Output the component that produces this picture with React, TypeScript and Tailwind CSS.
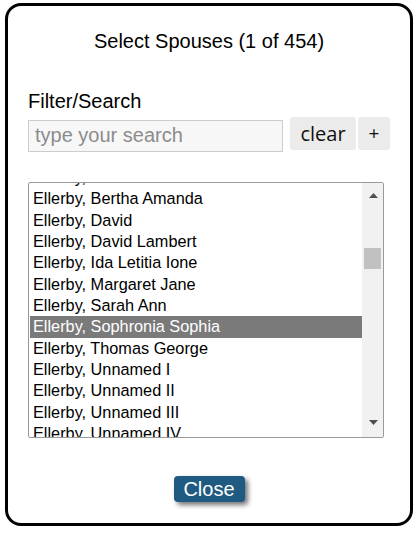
import React from "react";

const names = [
  "Ellerby, Annie",
  "Ellerby, Bertha Amanda",
  "Ellerby, David",
  "Ellerby, David Lambert",
  "Ellerby, Ida Letitia Ione",
  "Ellerby, Margaret Jane",
  "Ellerby, Sarah Ann",
  "Ellerby, Sophronia Sophia",
  "Ellerby, Thomas George",
  "Ellerby, Unnamed I",
  "Ellerby, Unnamed II",
  "Ellerby, Unnamed III",
  "Ellerby, Unnamed IV",
  "Ellerby, William",
];

const selected = "Ellerby, Sophronia Sophia";

export default function App() {
  return (
    <div className="w-[419px] h-[534px] bg-white pt-[3px] pl-[5px] font-['Liberation_Sans',Arial,sans-serif] text-black">
      <div className="w-[408px] h-[523px] border-[3px] border-black rounded-[16px] flex flex-col px-5 pt-[23px]">
        {/* header */}
        <h1 className="text-[20px] leading-[24px] text-center font-normal">
          Select Spouses (1 of 454)
        </h1>

        <label className="mt-[36px] text-[20px] leading-[24px] block">Filter/Search</label>

        <div className="mt-[4px] flex items-start">
          <input
            placeholder="type your search"
            className="mt-[3px] w-[255px] h-[32px] border border-[#cccccc] bg-[#f7f7f7] px-[6px] pb-[2px] text-[20px] placeholder:text-[#8c8c8c] outline-none"
          />
          <button className="ml-[7px] w-[66px] h-[33px] bg-[#ebebeb] rounded-[3px] text-[20px] font-['Open_Sans',sans-serif] text-[#111] leading-none">
            clear
          </button>
          <button className="ml-[2px] w-[32px] h-[33px] bg-[#ebebeb] rounded-[3px] text-[19px] font-['Open_Sans',sans-serif] text-[#111] leading-none pb-[1px]">
            +
          </button>
        </div>

        {/* list box */}
        <div className="mt-[30px] w-[356px] h-[256px] border border-[#9a9a9a] rounded-[2px] flex overflow-hidden">
          <div className="flex-1 overflow-hidden">
            <ul className="-mt-[16px] pl-[1px]">
              {names.map((n) => (
                <li
                  key={n}
                  className={`h-[21.33px] leading-[21.33px] text-[16.3px] pl-[3px] whitespace-nowrap ${
                    n === selected ? "bg-[#7a7a7a] text-white" : ""
                  }`}
                >
                  {n}
                </li>
              ))}
            </ul>
          </div>
          <div className="w-[21px] bg-[#f1f1f1] flex flex-col items-center">
            <svg width="9" height="5" viewBox="0 0 9 5" className="mt-[10px] ml-[1px]">
              <polygon points="0,5 4.5,0 9,5" fill="#505050" />
            </svg>
            <div className="mt-[50px] w-[17px] h-[21px] bg-[#c1c1c1]" />
            <div className="flex-1" />
            <svg width="9" height="5" viewBox="0 0 9 5" className="mb-[12px] ml-[1px]">
              <polygon points="0,0 9,0 4.5,5" fill="#505050" />
            </svg>
          </div>
        </div>

        <div className="mt-[38px] flex justify-center">
          <button className="w-[71px] h-[26px] bg-[#1f5a82] text-white text-[20px] leading-none rounded-[4px] shadow-[3px_3px_5px_rgba(0,0,0,0.55)] pb-[1px]">
            Close
          </button>
        </div>
      </div>
    </div>
  );
}
